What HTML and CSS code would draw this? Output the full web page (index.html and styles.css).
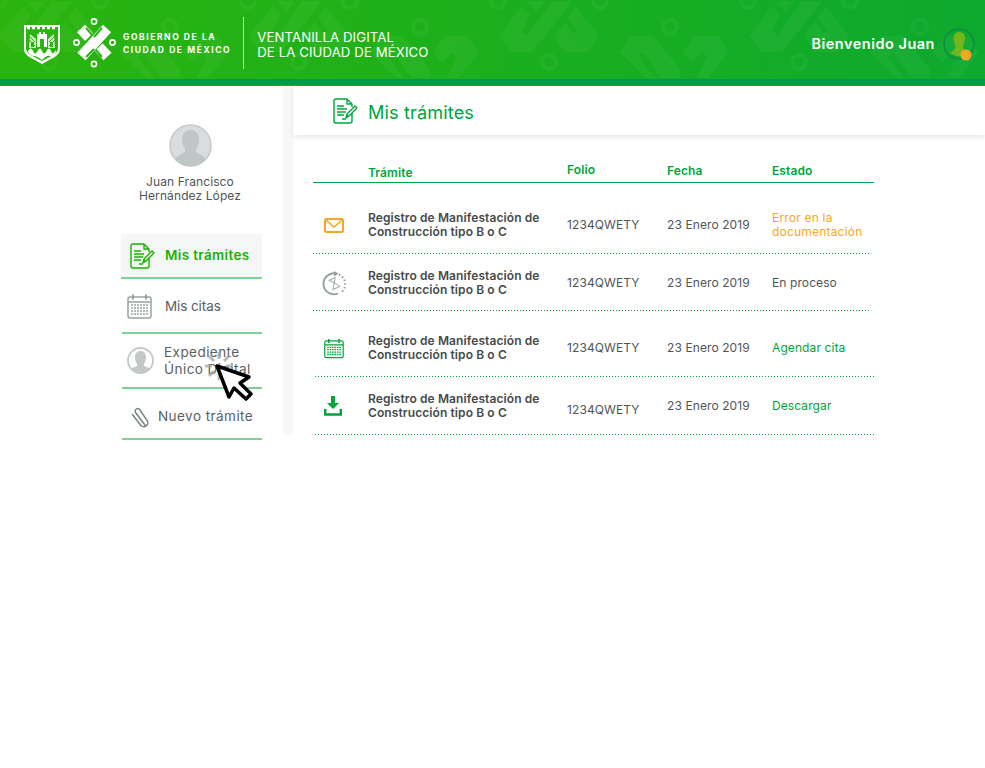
FILE: index.html
```html
<!DOCTYPE html>
<html lang="es">
<head>
    <meta charset="UTF-8">
    <meta name="viewport" content="width=device-width, initial-scale=1.0">
    <title>Ventanilla Digital</title>
    <link rel="stylesheet" href="styles.css">
</head>
<body>
    <svg class="sprites" width="0" height="0">
        <symbol id="ico-doc" viewBox="0 0 25 26">
            <path d="M14 1H3a2 2 0 0 0-2 2v20a2 2 0 0 0 2 2h14a2 2 0 0 0 2-2v-8M14 1l5 5v3M14 1v5h5" fill="none" stroke="currentColor" stroke-width="1.4" stroke-linejoin="round"/>
            <path d="M4 8h7M4 11h10M4 14h9M4 17h7M9 21h4" fill="none" stroke="currentColor" stroke-width="1.4"/>
            <path d="M13 20l1-4 8-8 2 2-8 8z" fill="none" stroke="currentColor" stroke-width="1.4" stroke-linejoin="round"/>
            <path d="M13 20l1-4 2 2z" fill="currentColor"/>
        </symbol>
        <symbol id="ico-cal" viewBox="0 0 25 25">
            <path d="M3 3h19a2 2 0 0 1 2 2v17a2 2 0 0 1-2 2H3a2 2 0 0 1-2-2V5a2 2 0 0 1 2-2zM1 8h23" fill="none" stroke="currentColor" stroke-width="1.5"/>
            <path d="M6 0.5v5M19 0.5v5" fill="none" stroke="currentColor" stroke-width="2"/>
            <path d="M4 11h17M4 14h17M4 17h17M4 20h17" fill="none" stroke="currentColor" stroke-width="1.6" stroke-dasharray="2 1"/>
        </symbol>
    </svg>

    <header class="topbar">
        <svg class="topbar-pattern" width="985" height="79">
            <defs>
                <pattern id="motif" width="250" height="79" patternUnits="userSpaceOnUse" patternTransform="translate(180 0)">
                    <g fill="#fff" fill-opacity="0.04">
                        <polygon points="69,36 92,6 100,15 91,32 98,35 122,1 142,1 102,52 82,52"/>
                        <polygon points="97,1 115,1 106,12"/>
                        <polygon points="124,36 135,22 143,33 148,32 138,17 146,7 169,36 158,52 135,52"/>
                        <polygon points="3,52 15,36 38,36 49,52 28,78 17,78 27,57 22,52 12,63"/>
                        <polygon points="190,52 202,36 223,36 257,78 231,78 217,57 212,53 208,57 224,78 216,78"/>
                    </g>
                    <g fill="none" stroke="#fff" stroke-opacity="0.04" stroke-width="4">
                        <circle cx="119" cy="62" r="7"/>
                        <circle cx="240" cy="27" r="7"/>
                        <circle cx="68" cy="1" r="7"/>
                        <circle cx="170" cy="1" r="7"/>
                    </g>
                </pattern>
            </defs>
            <rect width="985" height="79" fill="url(#motif)"/>
        </svg>

        <div class="brand">
            <svg class="shield" width="38" height="41" viewBox="0 0 38 41">
                <path d="M1 1h36v24c0 7-8 9-18 15C9 34 1 32 1 25z" fill="#fff"/>
                <path d="M3 3h32v21c0 6-7 8-16 13C10 32 3 30 3 24z" fill="#2bb40f"/>
                <path d="M4 4h30" stroke="#fff" stroke-width="2.500" stroke-dasharray="3 2" fill="none"/>
                <path d="M5 27q3-5 5 0t4.500 0 4.500 0 4.500 0 4.500 0 5-1v2q-3 5-6 4t-8 4q-5-4-8-4t-6-4z" fill="#fff"/>
                <path d="M14 23v-13h2V8h2v2h2V8h2v2h2v13z" fill="#fff"/>
                <path d="M7 10l6 5v9H6zM31 10l-6 5v9h7z" fill="#cdeec2"/>
                <path d="M17 15h4v8h-4zM8 18h3v5H8zM27 18h3v5h-3z" fill="#2bb40f"/>
                <path d="M6 12l6 6M32 12l-6 6M6 16l6 6M32 16l-6 6" stroke="#2bb40f" fill="none"/>
            </svg>
            <svg class="cdmx" width="46" height="50" viewBox="0 0 46 50">
                <g fill="none" stroke="#fff" stroke-width="1.600">
                    <circle cx="21" cy="3.500" r="2.600"/>
                    <circle cx="21" cy="46" r="2.600"/>
                    <circle cx="3.500" cy="24.500" r="2.600"/>
                    <circle cx="39.500" cy="24.500" r="2.600"/>
                </g>
                <g fill="none">
                    <path d="M8 10.500L34.500 38.500" stroke="#fff" stroke-width="11"/>
                    <path d="M13 10L21 19M22 31L29 39" stroke="#27b312" stroke-width="2"/>
                    <path d="M14 31L28 17" stroke="#27b312" stroke-width="14"/>
                    <path d="M34 10.500L8.500 38.500" stroke="#fff" stroke-width="11"/>
                    <path d="M29 10L21 19M21 31L13 39" stroke="#27b312" stroke-width="2"/>
                </g>
            </svg>
            <div class="gob">GOBIERNO DE LA<br>CIUDAD DE MÉXICO</div>
            <div class="brand-sep"></div>
            <div class="ventanilla">VENTANILLA DIGITAL<br>DE LA CIUDAD DE MÉXICO</div>
        </div>

        <div class="welcome">
            <span>Bienvenido Juan</span>
            <span class="welcome-pic">
                <svg width="32" height="34" viewBox="0 0 32 34">
                    <circle cx="16" cy="16" r="15" fill="none" stroke="#0d8d48" stroke-width="1.600"/>
                    <path d="M10.500 9a5.800 5.800 0 0 1 11.500 0c0 4-1 7-2 8v3l3 3-2 5H13c-1-1-3-2-6-2l5.500-6v-3c-1-1-2-4-2-8z" fill="#74b61d"/>
                    <circle cx="23" cy="27" r="5.500" fill="#f6a626"/>
                </svg>
            </span>
        </div>
    </header>
    <div class="topbar-band"></div>

    <div class="layout">
        <aside class="sidebar">
            <div class="profile">
                <svg class="profile-pic" width="43" height="43" viewBox="0 0 43 43">
                    <circle cx="21.500" cy="21.500" r="20.500" fill="#d9dddd" stroke="#c3c8c8" stroke-width="1.500"/>
                    <path d="M13 15c0-6 4-9 8.500-9S30 9 30 15c0 4-1 8-3 10v3l7 4 3 3a20 20 0 0 1-31 0l3-3 7-4v-3c-2-2-3-6-3-10z" fill="#c0c5c5"/>
                </svg>
                <div class="profile-name">Juan Francisco<br>Hernández López</div>
            </div>
            <nav class="menu">
                <a class="menu-item menu-item-on">
                    <svg class="menu-doc" width="25" height="26"><use href="#ico-doc"/></svg>
                    Mis trámites
                </a>
                <a class="menu-item menu-citas">
                    <svg class="menu-cal" width="25" height="25"><use href="#ico-cal"/></svg>
                    Mis citas
                </a>
                <a class="menu-item menu-exp">
                    <svg width="27" height="27" viewBox="0 0 27 27">
                        <clipPath id="exp-clip"><circle cx="13.500" cy="13.500" r="12"/></clipPath>
                        <circle cx="13.500" cy="13.500" r="12.500" fill="#fff" stroke="#c3c8c8" stroke-width="1.800"/>
                        <path clip-path="url(#exp-clip)" d="M8 10c0-4 2.500-6 5.500-6S19 6 19 10c0 3-1 5-2 7v2l5 2 3 6H2l3-6 5-2v-2c-1-2-2-4-2-7z" fill="#c3c8c8"/>
                    </svg>
                    <span>Expediente<br>Único Digital</span>
                </a>
                <a class="menu-item menu-nuevo">
                    <svg width="19" height="22" viewBox="0 0 19 22">
                        <path d="M15 18L5.500 5.500a2.600 2.600 0 0 1 4-3.200l7.500 11a4 4 0 0 1-6.500 4.700L2.500 7.500" fill="none" stroke="#7b8282" stroke-width="1.500" stroke-linecap="round" transform="translate(-1 1)"/>
                    </svg>
                    Nuevo trámite
                </a>
            </nav>
        </aside>
        <div class="gutter"></div>

        <main class="content">
            <div class="title-bar">
                <svg width="25" height="26"><use href="#ico-doc"/></svg>
                <h1>Mis trámites</h1>
            </div>

            <div class="tramites">
                <div class="tr-head">
                    <span></span>
                    <span class="head-tramite">Trámite</span>
                    <span class="head-folio">Folio</span>
                    <span>Fecha</span>
                    <span>Estado</span>
                </div>

                <div class="tr-row tr-first">
                    <svg class="tr-ico" width="20" height="15" viewBox="0 0 20 15">
                        <rect x="1" y="1" width="18" height="13" rx="1.500" fill="none" stroke="#f6a626" stroke-width="2"/>
                        <path d="M2 2l8 7 8-7" fill="none" stroke="#f6a626" stroke-width="1.600"/>
                    </svg>
                    <div class="tr-name">Registro de Manifestación de<br>Construcción tipo B o C</div>
                    <div>1234QWETY</div>
                    <div>23 Enero 2019</div>
                    <div class="st-error">Error en la<br>documentación</div>
                </div>

                <div class="tr-row tr-second">
                    <svg class="tr-ico tr-ico-wide" width="25" height="25" viewBox="0 0 25 25">
                        <path d="M14 2.500A10.500 10.500 0 1 0 16 22.500" fill="none" stroke="#949c9c" stroke-width="1.800"/>
                        <path d="M12 0l4.500 2.700L12 5.500z" fill="#949c9c"/>
                        <path d="M17 3.500a10.500 10.500 0 0 1 2 18" fill="none" stroke="#949c9c" stroke-width="2" stroke-dasharray="1.500 2.200"/>
                        <path d="M9 7.500h6.500l-3 4.500 3.500 5.500H8.500l4-5.500z" fill="none" stroke="#a4aaaa" stroke-width="1" transform="rotate(-25 12 12.500)"/>
                    </svg>
                    <div class="tr-name">Registro de Manifestación de<br>Construcción tipo B o C</div>
                    <div>1234QWETY</div>
                    <div>23 Enero 2019</div>
                    <div>En proceso</div>
                </div>

                <div class="tr-row tr-inset tr-third">
                    <svg class="tr-ico tr-cal" width="20" height="21"><use href="#ico-cal"/></svg>
                    <div class="tr-name">Registro de Manifestación de<br>Construcción tipo B o C</div>
                    <div>1234QWETY</div>
                    <div>23 Enero 2019</div>
                    <div class="st-ok">Agendar cita</div>
                </div>

                <div class="tr-row tr-inset tr-fourth">
                    <svg class="tr-ico" width="18" height="20" viewBox="0 0 18 20">
                        <path d="M7 0h4v7h4l-6 6-6-6h4z" fill="#00a53c"/>
                        <path d="M1.200 13v5.500h15.600V13" fill="none" stroke="#00a53c" stroke-width="2.400"/>
                    </svg>
                    <div class="tr-name">Registro de Manifestación de<br>Construcción tipo B o C</div>
                    <div class="folio-low">1234QWETY</div>
                    <div>23 Enero 2019</div>
                    <div class="st-ok">Descargar</div>
                </div>
            </div>
        </main>
    </div>

    <svg class="pointer" width="56" height="56" viewBox="0 0 56 56">
        <g stroke="#9fa5a5" stroke-width="3" opacity="0.75">
            <path d="M16 2v7M16 23v7M2 16h7M23 16h7M6 6l5 5M21 21l5 5M26 6l-5 5M6 26l5-5"/>
        </g>
        <path d="M14 16L46 27 37 33 48 44 43 49 31 38 26 47z" fill="#fff" stroke="#000" stroke-width="3.500" stroke-linejoin="round"/>
    </svg>
</body>
</html>
```

FILE: styles.css
```css
body {
    font-family: Inter, "Noto Sans", sans-serif;
    font-size: 12px;
    line-height: 14px;
    letter-spacing: 0.1px;
    color: #505555;
    margin: 0;
    background-color: white;
}
.sprites {
    position: absolute;
}
.topbar {
    position: relative;
    height: 79px;
    display: flex;
    justify-content: space-between;
    align-items: center;
    background: linear-gradient(90deg, #2bb40e 0%, #1db01b 45%, #0da92f 100%);
    color: white;
}
.topbar-pattern {
    position: absolute;
    left: 0;
    top: 0;
}
.topbar-band {
    height: 6px;
    background-color: #009a4d;
    border-bottom: 1px solid #12ab35;
}
.brand {
    position: relative;
    display: flex;
    align-items: center;
    padding-left: 23px;
    padding-top: 7px;
}
.shield {
    margin-top: 2px;
}
.cdmx {
    margin-left: 12px;
    margin-top: -1px;
}
.gob {
    margin-left: 4px;
    margin-top: 2px;
    font-size: 8.500px;
    line-height: 13px;
    font-weight: 700;
    letter-spacing: 1.570px;
    white-space: nowrap;
}
.brand-sep {
    width: 1px;
    height: 52px;
    margin: 0 13px 0 12px;
    background-color: #dff3d9;
}
.ventanilla {
    margin-top: 3px;
    font-size: 13.200px;
    line-height: 15px;
    white-space: nowrap;
}
.welcome {
    position: relative;
    display: flex;
    align-items: center;
    gap: 8px;
    padding-right: 10px;
    padding-top: 8px;
    font-size: 14.500px;
    font-weight: 600;
    letter-spacing: 0.5px;
}
.welcome-pic {
    display: flex;
    margin-top: 2px;
}
.layout {
    display: flex;
    align-items: flex-start;
}
.sidebar {
    width: 283px;
    flex: none;
}
.profile {
    display: flex;
    flex-direction: column;
    align-items: center;
    padding-top: 38px;
    padding-left: 97px;
    text-align: center;
    white-space: nowrap;
}
.profile-pic {
    margin-bottom: 8px;
}
.menu {
    margin-top: 31px;
    margin-left: 122px;
    width: 140px;
    font-size: 13.500px;
    color: #5a6060;
}
.menu-item {
    display: flex;
    align-items: center;
    border-bottom: 2px solid #7dd296;
    line-height: 17px;
    letter-spacing: 0.45px;
}
.menu-item-on {
    height: 43px;
    margin-left: -1px;
    padding-left: 9px;
    gap: 10px;
    background-color: #f5f7f6;
    color: #1ab200;
    font-weight: 600;
    letter-spacing: 0.35px;
}
.menu-citas {
    box-sizing: border-box;
    height: 55px;
    padding: 2px 0 0 5px;
    gap: 13px;
    letter-spacing: -0.1px;
}
.menu-cal {
    color: #9aa1a1;
}
.menu-doc {
    color: #1ab200;
}
.menu-exp {
    height: 53px;
    padding-left: 5px;
    gap: 10px;
}
.menu-nuevo {
    box-sizing: border-box;
    height: 51px;
    padding: 6px 0 0 9px;
    gap: 8px;
}
.gutter {
    width: 10px;
    height: 348px;
    flex: none;
    background-color: #f7f8f8;
}
.content {
    flex: 1;
}
.title-bar {
    height: 49px;
    display: flex;
    align-items: center;
    gap: 10px;
    padding-left: 40px;
    color: #00a53c;
    box-shadow: 0 2px 5px rgba(0,0,0,0.1);
}
.title-bar h1 {
    margin: 2px 0 0;
    font-size: 18.200px;
    font-weight: 400;
}
.tramites {
    margin: 26px 0 0 20px;
    width: 561px;
}
.tr-head,
.tr-row {
    display: grid;
    grid-template-columns: 55px 199px 100px 105px 1fr;
}
.tr-head {
    height: 18px;
    padding-top: 3px;
    color: #00a53c;
    font-weight: 600;
    border-bottom: 1px solid #00a53c;
}
.head-tramite {
    padding-top: 2px;
}
.head-folio {
    margin-top: -1px;
}
.tr-row {
    align-items: center;
    background: repeating-linear-gradient(90deg, #00a53c 0 1px, transparent 1px 3px) bottom / 100% 1px no-repeat;
    margin-right: 3px;
}
.tr-inset {
    grid-template-columns: 53px 199px 100px 105px 1fr;
    margin: 0 -1px 0 2px;
}
.tr-first {
    padding: 28px 0 15px;
}
.tr-second {
    padding: 15px 0 14px;
}
.tr-third {
    padding: 23px 0 15px;
}
.tr-fourth {
    padding: 15px 0 15px;
}
.tr-ico {
    margin-left: 11px;
}
.tr-ico-wide {
    margin-left: 9px;
}
.tr-inset .tr-ico {
    margin-left: 9px;
}
.tr-cal {
    color: #00a53c;
}
.tr-name {
    font-weight: 600;
    color: #454a4a;
    white-space: nowrap;
}
.folio-low {
    margin-top: 8px;
}
.st-error {
    color: #f6a626;
    letter-spacing: 0.2px;
}
.st-ok {
    color: #00a53c;
}
.pointer {
    position: absolute;
    left: 203px;
    top: 350px;
}
```
